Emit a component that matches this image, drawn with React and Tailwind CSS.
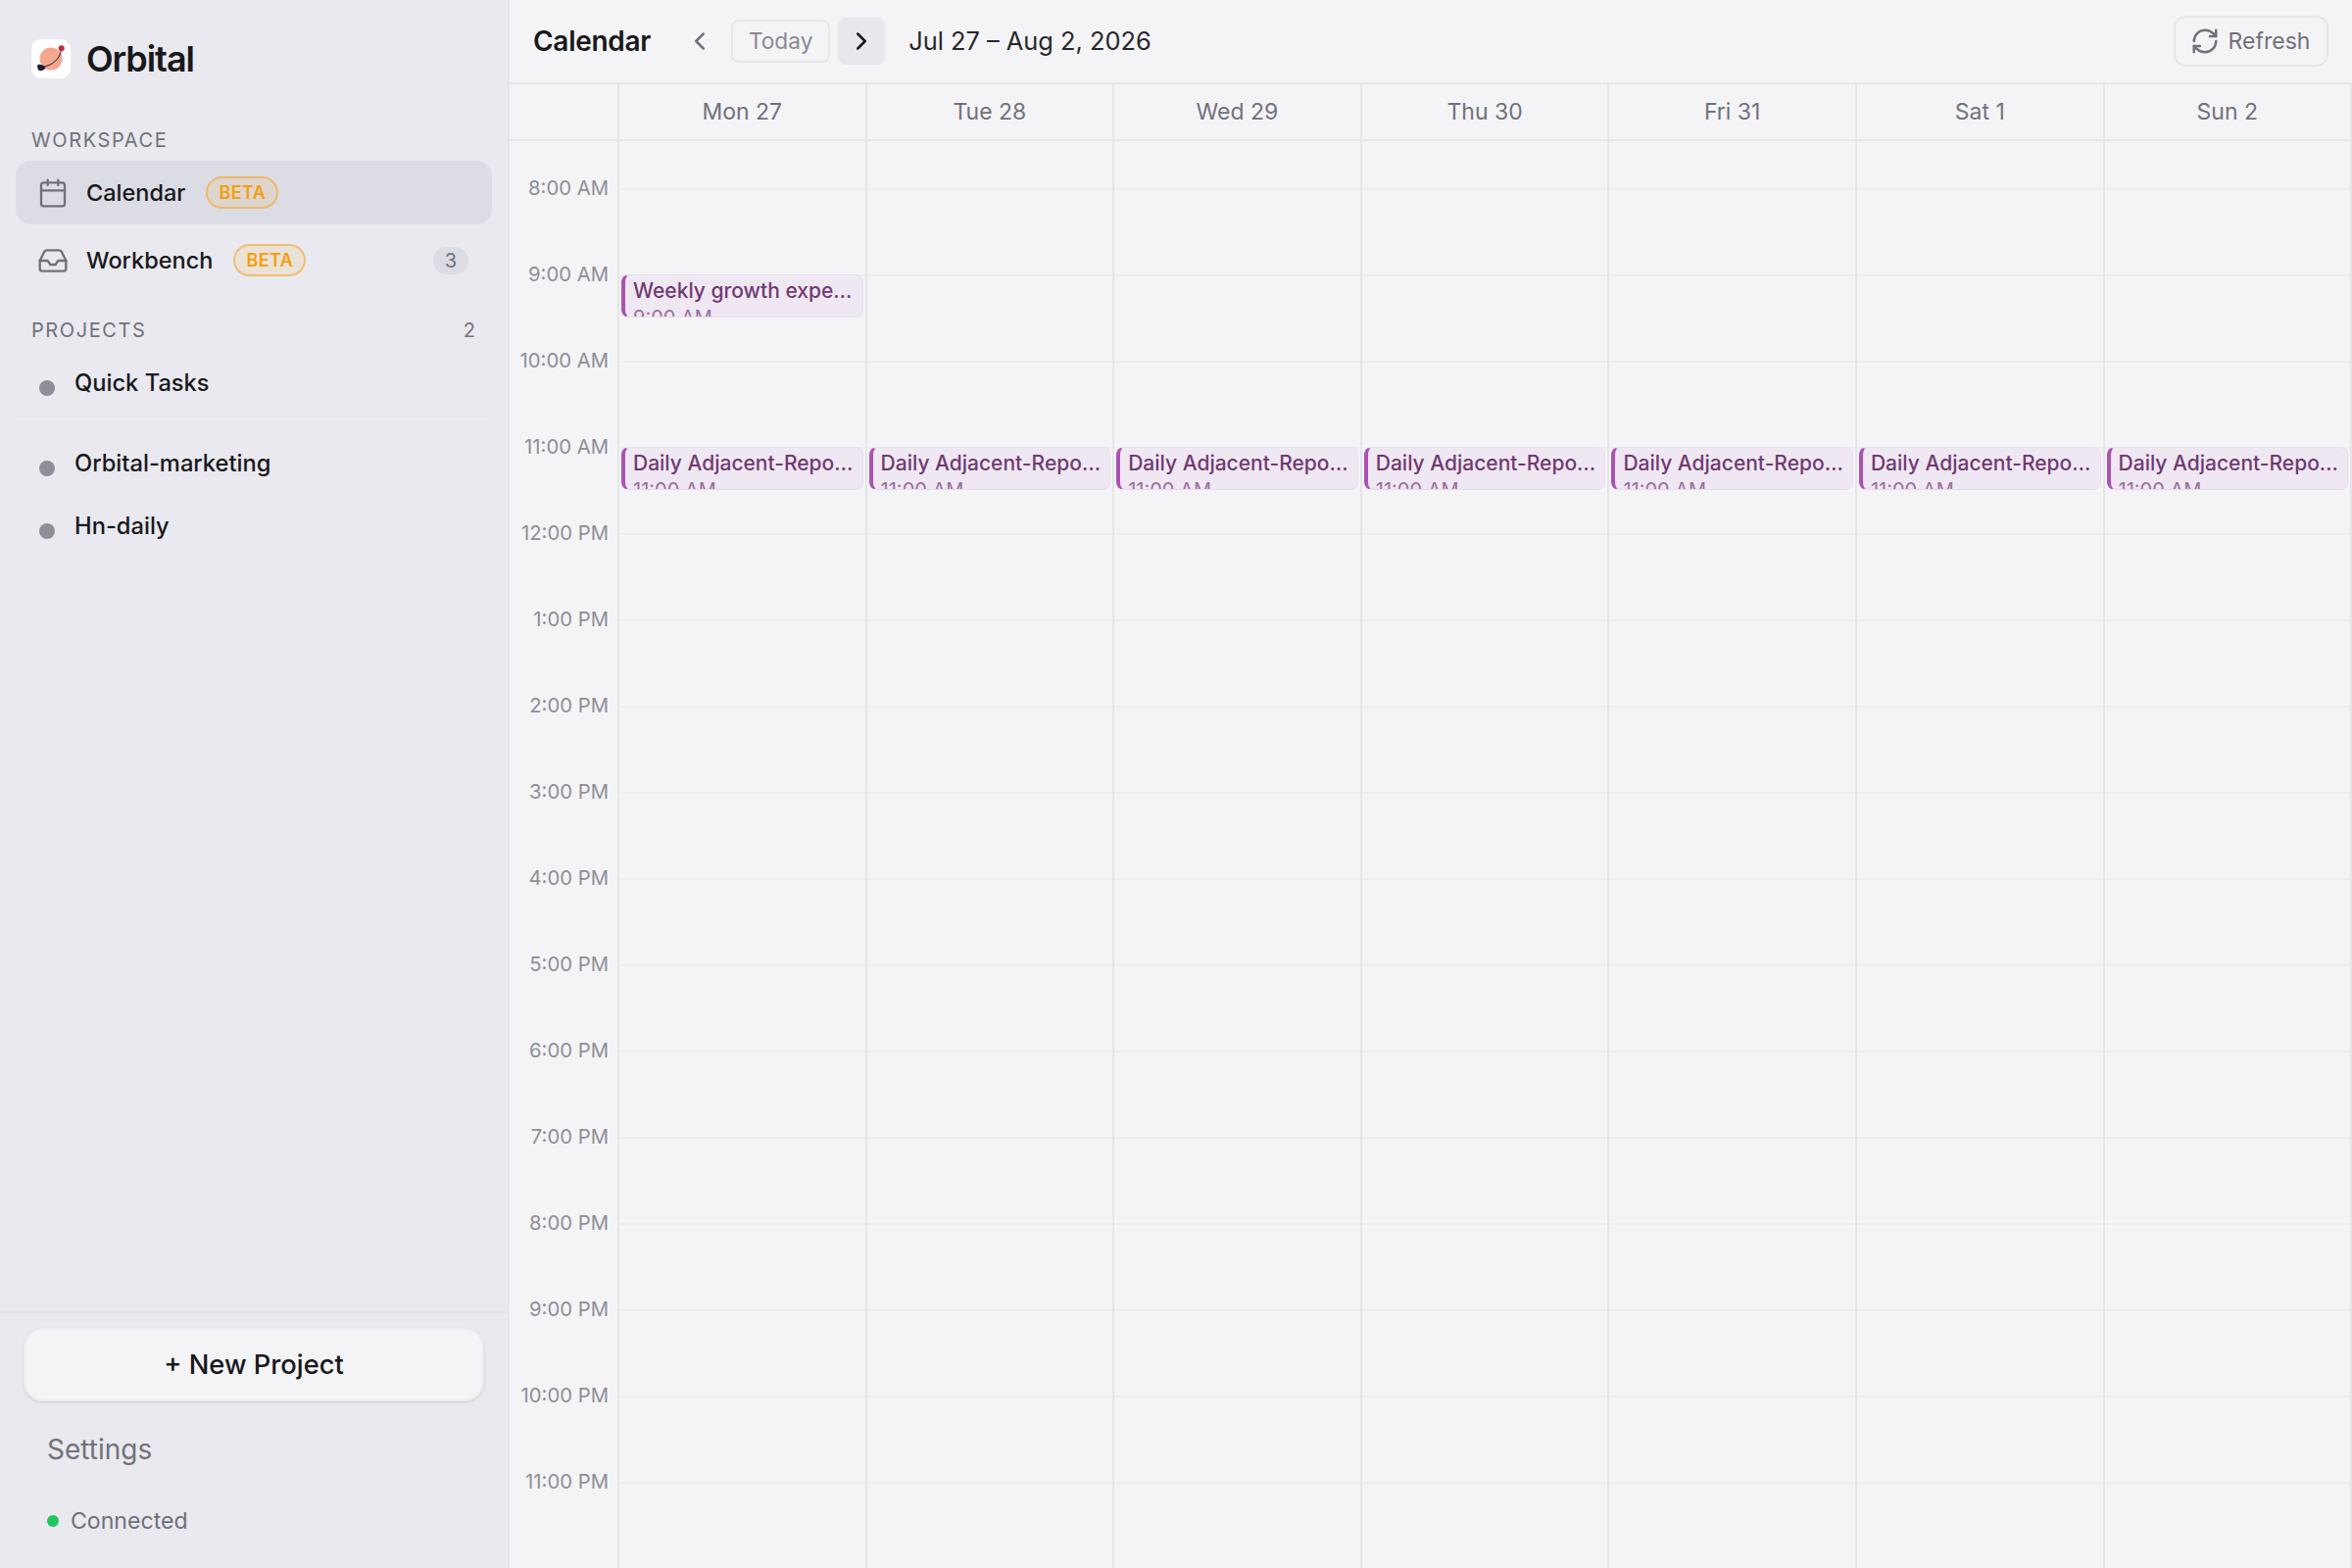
import { Calendar, Inbox, ChevronLeft, ChevronRight, RefreshCw } from 'lucide-react';

const days = ['Mon 27', 'Tue 28', 'Wed 29', 'Thu 30', 'Fri 31', 'Sat 1', 'Sun 2'];
const hours = ['8:00 AM', '9:00 AM', '10:00 AM', '11:00 AM', '12:00 PM', '1:00 PM', '2:00 PM', '3:00 PM', '4:00 PM', '5:00 PM', '6:00 PM', '7:00 PM', '8:00 PM', '9:00 PM', '10:00 PM', '11:00 PM'];

function Logo() {
  return (
    <div className="w-10 h-10 rounded-[10px] bg-white shrink-0">
      <svg width="40" height="40" viewBox="0 0 40 40">
        <circle cx="20" cy="20" r="11.5" fill="#f5a68f" />
        <path d="M30.5 10C29.5 20 22 26.500 11 28.500" fill="none" stroke="#1c1c2e" strokeWidth="1" />
        <path d="M6.500 26C9.500 25 13 27 14.500 29.500C12 32.500 8.500 33 7 31C6 29.500 6 27.500 6.500 26Z" fill="#1a1a33" />
        <circle cx="30.700" cy="9.300" r="3" fill="#c62a35" />
      </svg>
    </div>
  );
}

function Beta() {
  return (
    <span className="ml-[21px] h-[33px] w-[74px] flex items-center justify-center rounded-full border-2 border-[#f59e0b]/50 bg-[#f59e0b]/10 text-[#f59e0b] text-[18px] font-semibold tracking-[0.02em]">
      BETA
    </span>
  );
}

function Project({ name, className }) {
  return (
    <div className={`flex items-start pl-10 ${className}`}>
      <span className="w-4 h-4 mt-[15px] rounded-full bg-[#8e8e98] shrink-0" />
      <span className="ml-[20px] text-[23.700px] leading-[36px] font-[450] text-[#18181b]">{name}</span>
    </div>
  );
}

function EventCard({ title, time }) {
  return (
    <div className="-mt-0.5 ml-0.5 mr-0.5 h-11 overflow-hidden rounded-lg border border-l-4 border-[#a855b5]/[0.08] border-l-[#ab52b3] bg-[#efe8f2] pl-2 pt-[2px]">
      <div className="text-[21px] leading-7 font-[450] whitespace-nowrap text-[#703a72]">{title}</div>
      <div className="mt-px text-[20px] leading-6 whitespace-nowrap text-[#9a6f9e]">{time}</div>
    </div>
  );
}

export default function App() {
  return (
    <div className="flex h-screen w-screen overflow-hidden bg-[#f4f4f7] font-['Inter',sans-serif] text-[#18181b]">
      {/* Sidebar */}
      <aside className="w-[520px] shrink-0 flex flex-col bg-[#e9e9ef] border-r-2 border-[#e6e6ea]">
        <div className="flex items-center pl-8 pt-10 h-[120px] pb-0 items-start">
          <Logo />
          <span className="ml-4 text-[36px] leading-10 font-semibold tracking-[-0.03em]">Orbital</span>
        </div>

        <div className="pl-8 mt-[9px] text-[20px] leading-7 font-normal tracking-[0.08em] text-[#71717a]">WORKSPACE</div>
        <nav className="mt-[7px] px-4 flex flex-col gap-1">
          <div className="h-[65px] flex items-center rounded-2xl bg-[#dcdce5] pl-[22px]">
            <Calendar size={32} strokeWidth={1.75} className="text-[#71717a]" />
            <span className="ml-[18px] text-[23.500px] font-[450]">Calendar</span>
            <Beta />
          </div>
          <div className="h-[65px] flex items-center rounded-2xl pl-[22px] pr-[24px]">
            <Inbox size={32} strokeWidth={1.75} className="text-[#71717a]" />
            <span className="ml-[18px] text-[23.500px] font-[450]">Workbench</span>
            <Beta />
            <span className="ml-auto w-9 h-7 rounded-full bg-[#dcdce5] flex items-center justify-center text-[20px] text-[#71717a]">3</span>
          </div>
        </nav>

        <div className="mt-[25px] pl-8 pr-[33px] flex justify-between text-[20px] leading-7 font-normal tracking-[0.08em] text-[#71717a]">
          <span>PROJECTS</span>
          <span className="tracking-normal">2</span>
        </div>
        <Project name="Quick Tasks" className="mt-[22px]" />
        <div className="mx-4 mt-[18px] h-0.5 bg-[#ededf1]" />
        <Project name="Orbital-marketing" className="mt-[26px]" />
        <Project name="Hn-daily" className="mt-7" />

        <div className="mt-auto border-t-2 border-[#e4e4e8] h-[262px] flex flex-col">
          <button className="mt-[15px] mx-6 h-[75px] pt-[2px] rounded-[20px] bg-[#f4f4f7] border-2 border-[#ececf0] shadow-sm text-[27.300px] font-medium">
            + New Project
          </button>
          <div className="mt-[31px] pl-[48px] text-[28px] leading-9 text-[#71717a]">Settings</div>
          <div className="mt-[39px] pl-[48px] flex items-center">
            <span className="w-3 h-3 rounded-full bg-[#22c55e]" />
            <span className="ml-3 text-[23.100px] leading-8 text-[#6f6f78]">Connected</span>
          </div>
        </div>
      </aside>

      {/* Main */}
      <main className="flex-1 min-w-0 flex flex-col">
        <header className="h-[86px] shrink-0 flex items-center border-b-2 border-[#e6e6ea] pl-6 pr-6">
          <span className="text-[28px] font-semibold tracking-[-0.01em]">Calendar</span>
          <ChevronLeft size={30} strokeWidth={2} className="ml-[35px] text-[#71717a]" />
          <button className="ml-[17px] h-[44px] w-[101px] rounded-lg border-2 border-[#e6e6ea] text-[22.700px] text-[#8a8a92]">Today</button>
          <button className="ml-2 w-12 h-12 rounded-lg bg-[#e7e7ed] flex items-center justify-center">
            <ChevronRight size={30} strokeWidth={2} />
          </button>
          <span className="ml-6 text-[25.400px] font-normal text-[#27272a]">Jul 27 – Aug 2, 2026</span>
          <button className="ml-auto h-[52px] w-[158px] pr-0.5 rounded-xl border-2 border-[#e6e6ea] flex items-center justify-center gap-[9px] text-[23px] text-[#71717a]">
            <RefreshCw size={30} strokeWidth={2} />
            Refresh
          </button>
        </header>

        <div className="h-[58px] shrink-0 grid grid-cols-[110px_repeat(6,252.600px)_1fr] border-b-2 border-[#e6e6ea]">
          <div />
          {days.map((d, i) => (
            <div key={d} className={`flex items-center justify-center border-l-2 border-[#e6e6ea] text-[23px] text-[#71717a] ${i === 6 ? 'border-r-2' : ''}`}>
              {d}
            </div>
          ))}
        </div>

        <div className="flex-1 min-h-0 overflow-hidden grid grid-cols-[110px_repeat(6,252.600px)_1fr]">
          <div className="flex flex-col">
            <div className="h-12 shrink-0" />
            {hours.map((h) => (
              <div key={h} className="h-[88px] shrink-0">
                <div className="-translate-y-1/2 pr-[9px] text-right text-[20.300px] leading-7 text-[#8e8e96]">{h}</div>
              </div>
            ))}
          </div>
          {days.map((d, i) => (
            <div key={d} className={`flex flex-col border-l-2 border-[#e6e6ea] ${i === 6 ? 'border-r-2' : ''}`}>
              <div className="h-12 shrink-0" />
              {hours.map((h) => (
                <div key={h} className="h-[88px] shrink-0 border-t-2 border-[#eeeef1]">
                  {i === 0 && h === '9:00 AM' && <EventCard title="Weekly growth expe…" time="9:00 AM" />}
                  {h === '11:00 AM' && <EventCard title="Daily Adjacent-Repo…" time="11:00 AM" />}
                </div>
              ))}
            </div>
          ))}
        </div>
      </main>
    </div>
  );
}
